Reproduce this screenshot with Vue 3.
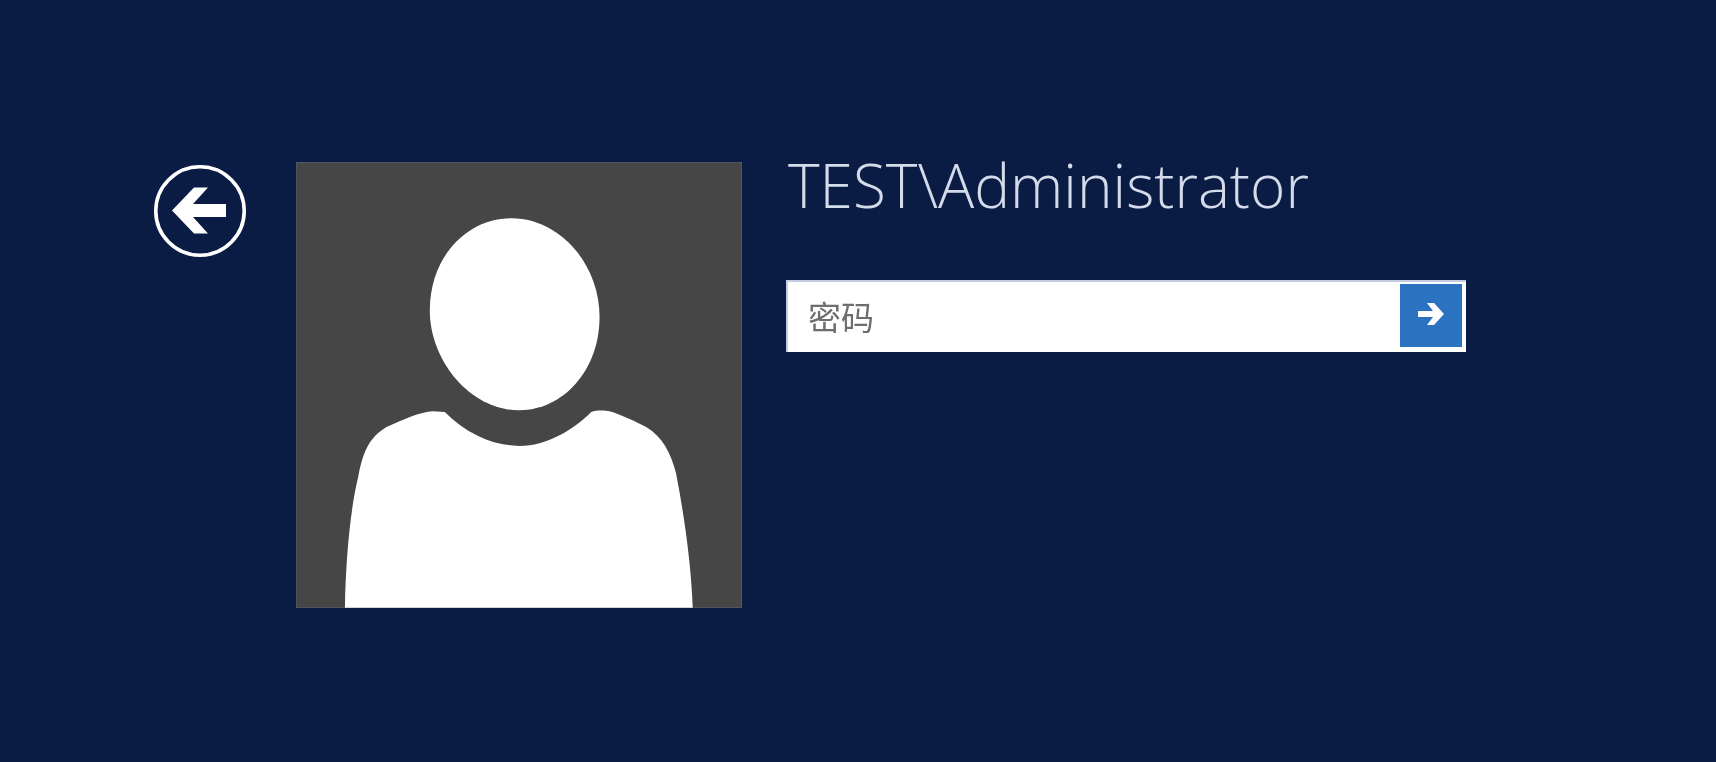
<script setup>
const user = 'TEST\\Administrator'
</script>

<template>
  <main class="screen">
    <button class="back" aria-label="返回">
      <svg viewBox="0 0 92 92" width="92" height="92">
        <circle cx="46" cy="46" r="44.2" fill="none" stroke="#fff" stroke-width="3.6" />
        <path d="M18 45.5 L40 22.5 H54 L39 39 H72 V52 H39 L54 68.5 H40 Z" fill="#fff" />
      </svg>
    </button>
    <div class="avatar">
      <svg viewBox="48 35 1340 1338" width="446" height="446">
        <path fill="#fff" d="M450 480 C450 320 560 203 695 203 C840 203 960 340 960 500 C960 660 850 780 720 780 C570 780 450 630 450 480 Z" />
        <path fill="#fff" d="M195 1373 C197 1240 210 1080 235 980 C250 900 270 860 320 830 C370 808 420 785 460 783 L495 785 C560 850 640 887 720 887 C800 887 880 840 935 785 C950 780 975 780 990 783 C1030 795 1070 815 1100 830 C1150 860 1175 910 1190 970 C1215 1100 1235 1240 1240 1373 Z" />
      </svg>
    </div>
    <section class="login">
      <h1 class="user">{{ user }}</h1>
      <div class="field">
        <span class="placeholder">密码</span>
        <button class="submit" aria-label="提交">
          <svg viewBox="0 0 30 24" width="30" height="24">
            <path d="M0 9 H15 L9 1 H16 L26 12 L16 23 H9 L15 15 H0 Z" transform="translate(2 0)" fill="#fff" />
          </svg>
        </button>
      </div>
    </section>
  </main>
</template>

<style>
html, body { margin: 0; background: #0a1c44; }
</style>

<style scoped>
.screen {
  box-sizing: border-box;
  width: 1716px;
  height: 762px;
  overflow: hidden;
  background: #0a1c44;
  display: flex;
  align-items: flex-start;
  padding: 162px 0 0 154px;
  filter: blur(0.5px);
}
.back {
  width: 92px;
  height: 92px;
  margin: 3px 50px 0 0;
  padding: 0;
  border: 0;
  background: none;
  display: flex;
}
.avatar {
  width: 446px;
  height: 446px;
  background: #464646;
  display: flex;
  box-shadow: inset 0 0 0 1px #50555f;
}
.login {
  margin-left: 44px;
  width: 680px;
}
.user {
  margin: -17px 0 0 2px;
  font: 300 60.3px/80px "Open Sans", sans-serif;
  color: #d3daea;
  white-space: nowrap;
}
.field {
  box-sizing: border-box;
  margin-top: 55px;
  width: 680px;
  height: 72px;
  background: #fff;
  border-top: 2px solid #c6cde2;
  border-left: 2px solid #c6cde2;
  display: flex;
  align-items: center;
  justify-content: space-between;
  padding: 0 4px 3px 20px;
}
.placeholder {
  font: 400 33px/40px "Noto Sans CJK SC", sans-serif;
  color: #6e6e6e;
}
.submit {
  width: 62px;
  height: 63px;
  padding: 0 0 3px;
  border: 0;
  background: #2b72c0;
  display: flex;
  align-items: center;
  justify-content: center;
}
</style>
